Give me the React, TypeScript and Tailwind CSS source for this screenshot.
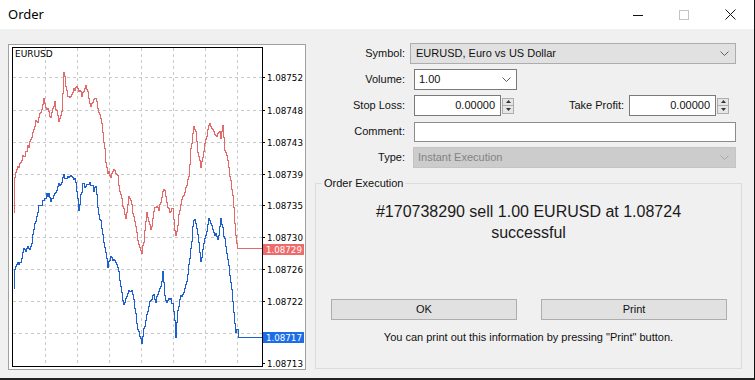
import type { ReactNode } from 'react';

type Pt = [number, number];

// rough shape of the ask (red) and bid (blue) ticks, page coordinates
const askPts: Pt[] = [
  [13, 212], [14, 175], [17, 167], [20, 160], [25, 152], [30, 140], [35, 122], [38, 118], [43, 100], [46, 108],
  [50, 115], [54, 103], [58, 120], [61, 112], [63, 70], [66, 92], [69, 98], [73, 90], [77, 86], [81, 96],
  [85, 84], [88, 98], [90, 108], [92, 100], [95, 96], [98, 112], [100, 118], [103, 140], [105, 160], [107, 172],
  [110, 175], [113, 168], [116, 172], [120, 195], [123, 208], [125, 217], [128, 197], [131, 205], [134, 222], [137, 240],
  [141, 255], [144, 232], [146, 212], [148, 222], [150, 230], [153, 212], [155, 205], [158, 210], [160, 202], [163, 188],
  [166, 200], [168, 210], [172, 210], [175, 237], [178, 215], [181, 200], [185, 188], [188, 175], [190, 150], [193, 124],
  [195, 130], [197, 150], [200, 166], [203, 150], [205, 140], [208, 123], [211, 130], [213, 132], [216, 136], [218, 130],
  [220, 136], [222, 123], [224, 148], [227, 160], [229, 175], [232, 195], [235, 235], [237, 248], [262, 248],
];

const bidPts: Pt[] = [
  [13, 288], [14, 268], [16, 262], [20, 262], [23, 250], [26, 248], [30, 248], [33, 230], [36, 215], [38, 205],
  [41, 205], [43, 200], [45, 196], [48, 192], [50, 200], [53, 197], [57, 185], [60, 182], [63, 175], [66, 178],
  [70, 174], [73, 177], [75, 180], [78, 210], [80, 195], [82, 185], [85, 185], [88, 182], [91, 184], [93, 190],
  [95, 185], [97, 207], [100, 222], [102, 235], [105, 250], [107, 265], [109, 258], [112, 258], [115, 262], [118, 272],
  [120, 285], [123, 305], [125, 298], [128, 292], [131, 292], [133, 300], [135, 315], [137, 330], [139, 335], [141, 343],
  [143, 330], [145, 320], [148, 305], [150, 300], [153, 295], [155, 300], [158, 290], [160, 285], [162, 272], [164, 295],
  [166, 302], [169, 298], [172, 302], [174, 320], [175, 335], [177, 310], [180, 296], [183, 290], [186, 282], [188, 265],
  [190, 250], [193, 218], [196, 228], [198, 240], [200, 260], [203, 245], [205, 235], [208, 218], [210, 225], [213, 230],
  [215, 235], [217, 240], [220, 218], [222, 228], [224, 240], [226, 252], [228, 265], [230, 280], [233, 310], [235, 333],
  [237, 329], [238, 337], [262, 337],
];

function noise(x: number, seed: number) {
  const v = Math.sin(x * 12.9898 + seed * 78.233) * 43758.5453;
  return v - Math.floor(v) - 0.5;
}

// interpolate per pixel and add some tick jitter, drawn as steps
function tickPath(pts: Pt[], seed: number) {
  let d = '';
  let prev = 0;
  for (let i = 0; i < pts.length - 1; i++) {
    const [x0, y0] = pts[i];
    const [x1, y1] = pts[i + 1];
    const flat = x1 - x0 > 10;
    for (let x = x0; x < x1; x++) {
      const t = (x - x0) / (x1 - x0);
      let y = y0 + (y1 - y0) * t;
      if (!flat && x > 13) y += noise(x, seed) * 5;
      y = Math.round(y) + 0.5;
      if (d === '') d = `M${x + 0.5} ${y}`;
      else d += ` L${x + 0.5} ${prev} L${x + 0.5} ${y}`;
      prev = y;
    }
  }
  const last = pts[pts.length - 1];
  d += ` L${last[0]} ${prev}`;
  return d;
}

const levels: [string, number][] = [
  ['1.08752', 77], ['1.08748', 110], ['1.08743', 142], ['1.08739', 174], ['1.08735', 205],
  ['1.08730', 237], ['1.08726', 269], ['1.08722', 301], ['1.08717', 333], ['1.08713', 363],
];
const gridX = [45, 77, 109, 141, 173, 205, 237];

function Chart() {
  return (
    <div className="w-[298px] h-[326px] mt-[1px] border border-[#a0a0a0] bg-white shrink-0">
      <svg width="296" height="324" viewBox="9 45 296 324" className="block" shapeRendering="crispEdges">
        {gridX.map((x) => (
          <line key={x} x1={x + 0.5} y1={48} x2={x + 0.5} y2={366} stroke="#c8c8c8" strokeDasharray="3 3" />
        ))}
        {levels.slice(0, 9).map(([, y]) => (
          <line key={y} x1={13} y1={y + 0.5} x2={262} y2={y + 0.5} stroke="#c8c8c8" strokeDasharray="3 3" />
        ))}
        {levels.map(([, y]) => (
          <line key={'t' + y} x1={262} y1={y + 0.5} x2={265} y2={y + 0.5} stroke="#000" />
        ))}
        <path d={tickPath(askPts, 1)} fill="none" stroke="#e36a6a" strokeWidth="1" />
        <path d={tickPath(bidPts, 2)} fill="none" stroke="#1d5fd1" strokeWidth="1" />
        <rect x={12.5} y={47.5} width={250} height={319} fill="none" stroke="#000" />
        <g fontFamily="'DejaVu Sans', Verdana, sans-serif" fontSize="8.7" shapeRendering="auto">
          <text x={15} y={54} dominantBaseline="central" fontSize="9" fill="#000">EURUSD</text>
          {levels.filter(([label]) => label !== '1.08717').map(([label, y]) => (
            <text key={label} x={267} y={y + 0.5} dominantBaseline="central" fill="#000">{label}</text>
          ))}
          <rect x={263} y={244} width={41} height={11} fill="#ef6b6b" shapeRendering="crispEdges" />
          <text x={266} y={249.5} dominantBaseline="central" fill="#fff">1.08729</text>
          <rect x={263} y={332} width={41} height={11} fill="#1c6ee8" shapeRendering="crispEdges" />
          <text x={266} y={337.5} dominantBaseline="central" fill="#fff">1.08717</text>
        </g>
      </svg>
    </div>
  );
}

function Chevron({ color = '#606060' }: { color?: string }) {
  return (
    <svg width="9" height="5" viewBox="0 0 9 5" className="shrink-0">
      <polyline points="0.5,0.5 4.5,4.5 8.5,0.5" fill="none" stroke={color} strokeWidth="1" />
    </svg>
  );
}

function Spinner() {
  return (
    <div className="w-[12px] h-[16px] border border-[#adadad] bg-[#e6e6e6] flex flex-col shrink-0">
      <div className="flex-1 flex items-center justify-center border-b border-[#adadad]">
        <svg width="5" height="3" viewBox="0 0 5 3"><polygon points="0,3 2.5,0 5,3" fill="#333" /></svg>
      </div>
      <div className="flex-1 flex items-center justify-center">
        <svg width="5" height="3" viewBox="0 0 5 3"><polygon points="0,0 2.5,3 5,0" fill="#333" /></svg>
      </div>
    </div>
  );
}

function Row({ label, children }: { label: string; children: ReactNode }) {
  return (
    <div className="flex items-center h-[21px]">
      <span className="w-[95px] text-right shrink-0">{label}</span>
      {children}
    </div>
  );
}

export default function App() {
  return (
    <div className="w-[755px] h-[380px] flex flex-col border-r border-b-2 border-r-[#111] border-b-[#222] font-['Liberation_Sans',Arial,sans-serif] text-[11px] text-[#111] overflow-hidden">
      {/* title bar */}
      <div className="h-[29px] bg-white flex items-center shrink-0">
        <span className="pl-[8px] text-[13px] font-['Noto_Sans',Arial,sans-serif] text-black">Order</span>
        <div className="ml-auto flex h-full mr-[1px]">
          <div className="w-[46px] flex items-center justify-center">
            <svg width="10" height="10" viewBox="0 0 10 10"><line x1="0" y1="5.5" x2="10" y2="5.5" stroke="#111" /></svg>
          </div>
          <div className="w-[46px] flex items-center justify-center">
            <svg width="10" height="10" viewBox="0 0 10 10"><rect x="0.5" y="0.5" width="9" height="9" fill="none" stroke="#c4c4c4" /></svg>
          </div>
          <div className="w-[46px] flex items-center justify-center">
            <svg width="11" height="11" viewBox="0 0 11 11">
              <line x1="0.5" y1="0.5" x2="10.5" y2="10.5" stroke="#111" />
              <line x1="10.5" y1="0.5" x2="0.5" y2="10.5" stroke="#111" />
            </svg>
          </div>
        </div>
      </div>

      {/* body */}
      <div className="flex-1 bg-[#f0f0f0] flex pl-[8px] pt-[14px]">
        <Chart />

        <div className="ml-[4px] w-[432px] flex flex-col">
          <div className="flex flex-col gap-[5px]">
            <Row label="Symbol:">
              <div className="ml-[5px] w-[326px] h-[21px] border border-[#adadad] bg-[#e1e1e1] flex items-center pl-[5px] pr-[6px]">
                <span className="flex-1">EURUSD, Euro vs US Dollar</span>
                <Chevron />
              </div>
            </Row>
            <Row label="Volume:">
              <div className="ml-[9px] w-[103px] h-[21px] border border-[#7a7a7a] bg-white flex items-center pl-[4px] pr-[5px]">
                <span className="flex-1">1.00</span>
                <Chevron />
              </div>
            </Row>
            <Row label="Stop Loss:">
              <div className="ml-[9px] w-[87px] h-[21px] border border-[#7a7a7a] bg-white flex items-center justify-end pr-[5px]">
                0.00000
              </div>
              <div className="ml-[1px]"><Spinner /></div>
              <span className="ml-auto">Take Profit:</span>
              <div className="ml-[5px] w-[87px] h-[21px] border border-[#7a7a7a] bg-white flex items-center justify-end pr-[5px]">
                0.00000
              </div>
              <div className="ml-[1px] mr-[13px]"><Spinner /></div>
            </Row>
            <Row label="Comment:">
              <div className="ml-[9px] w-[322px] h-[20px] border border-[#8c8c8c] bg-white" />
            </Row>
            <Row label="Type:">
              <div className="ml-[8px] w-[323px] h-[21px] border border-[#c4c4c4] bg-[#cccccc] flex items-center pl-[4px] pr-[6px] text-[#838383]">
                <span className="flex-1">Instant Execution</span>
                <Chevron color="#a8a8a8" />
              </div>
            </Row>
          </div>

          <fieldset className="mt-[8px] ml-[5px] w-[427px] h-[193px] border border-[#dcdcdc] flex flex-col">
            <legend className="ml-[6px] px-[2px] leading-[14px]">Order Execution</legend>
            <div className="mt-[11px] text-center text-[16px] leading-[21px] text-[#1a1a1a]">
              #170738290 sell 1.00 EURUSD at 1.08724
              <br />
              successful
            </div>
            <div className="mt-[56px] flex gap-[24px] pl-[15px]">
              <div className="w-[186px] h-[21px] border border-[#adadad] bg-[#e1e1e1] flex items-center justify-center">OK</div>
              <div className="w-[186px] h-[21px] border border-[#adadad] bg-[#e1e1e1] flex items-center justify-center">Print</div>
            </div>
            <div className="mt-[10px] text-center leading-[14px]">
              You can print out this information by pressing "Print" button.
            </div>
          </fieldset>
        </div>
      </div>
    </div>
  );
}
